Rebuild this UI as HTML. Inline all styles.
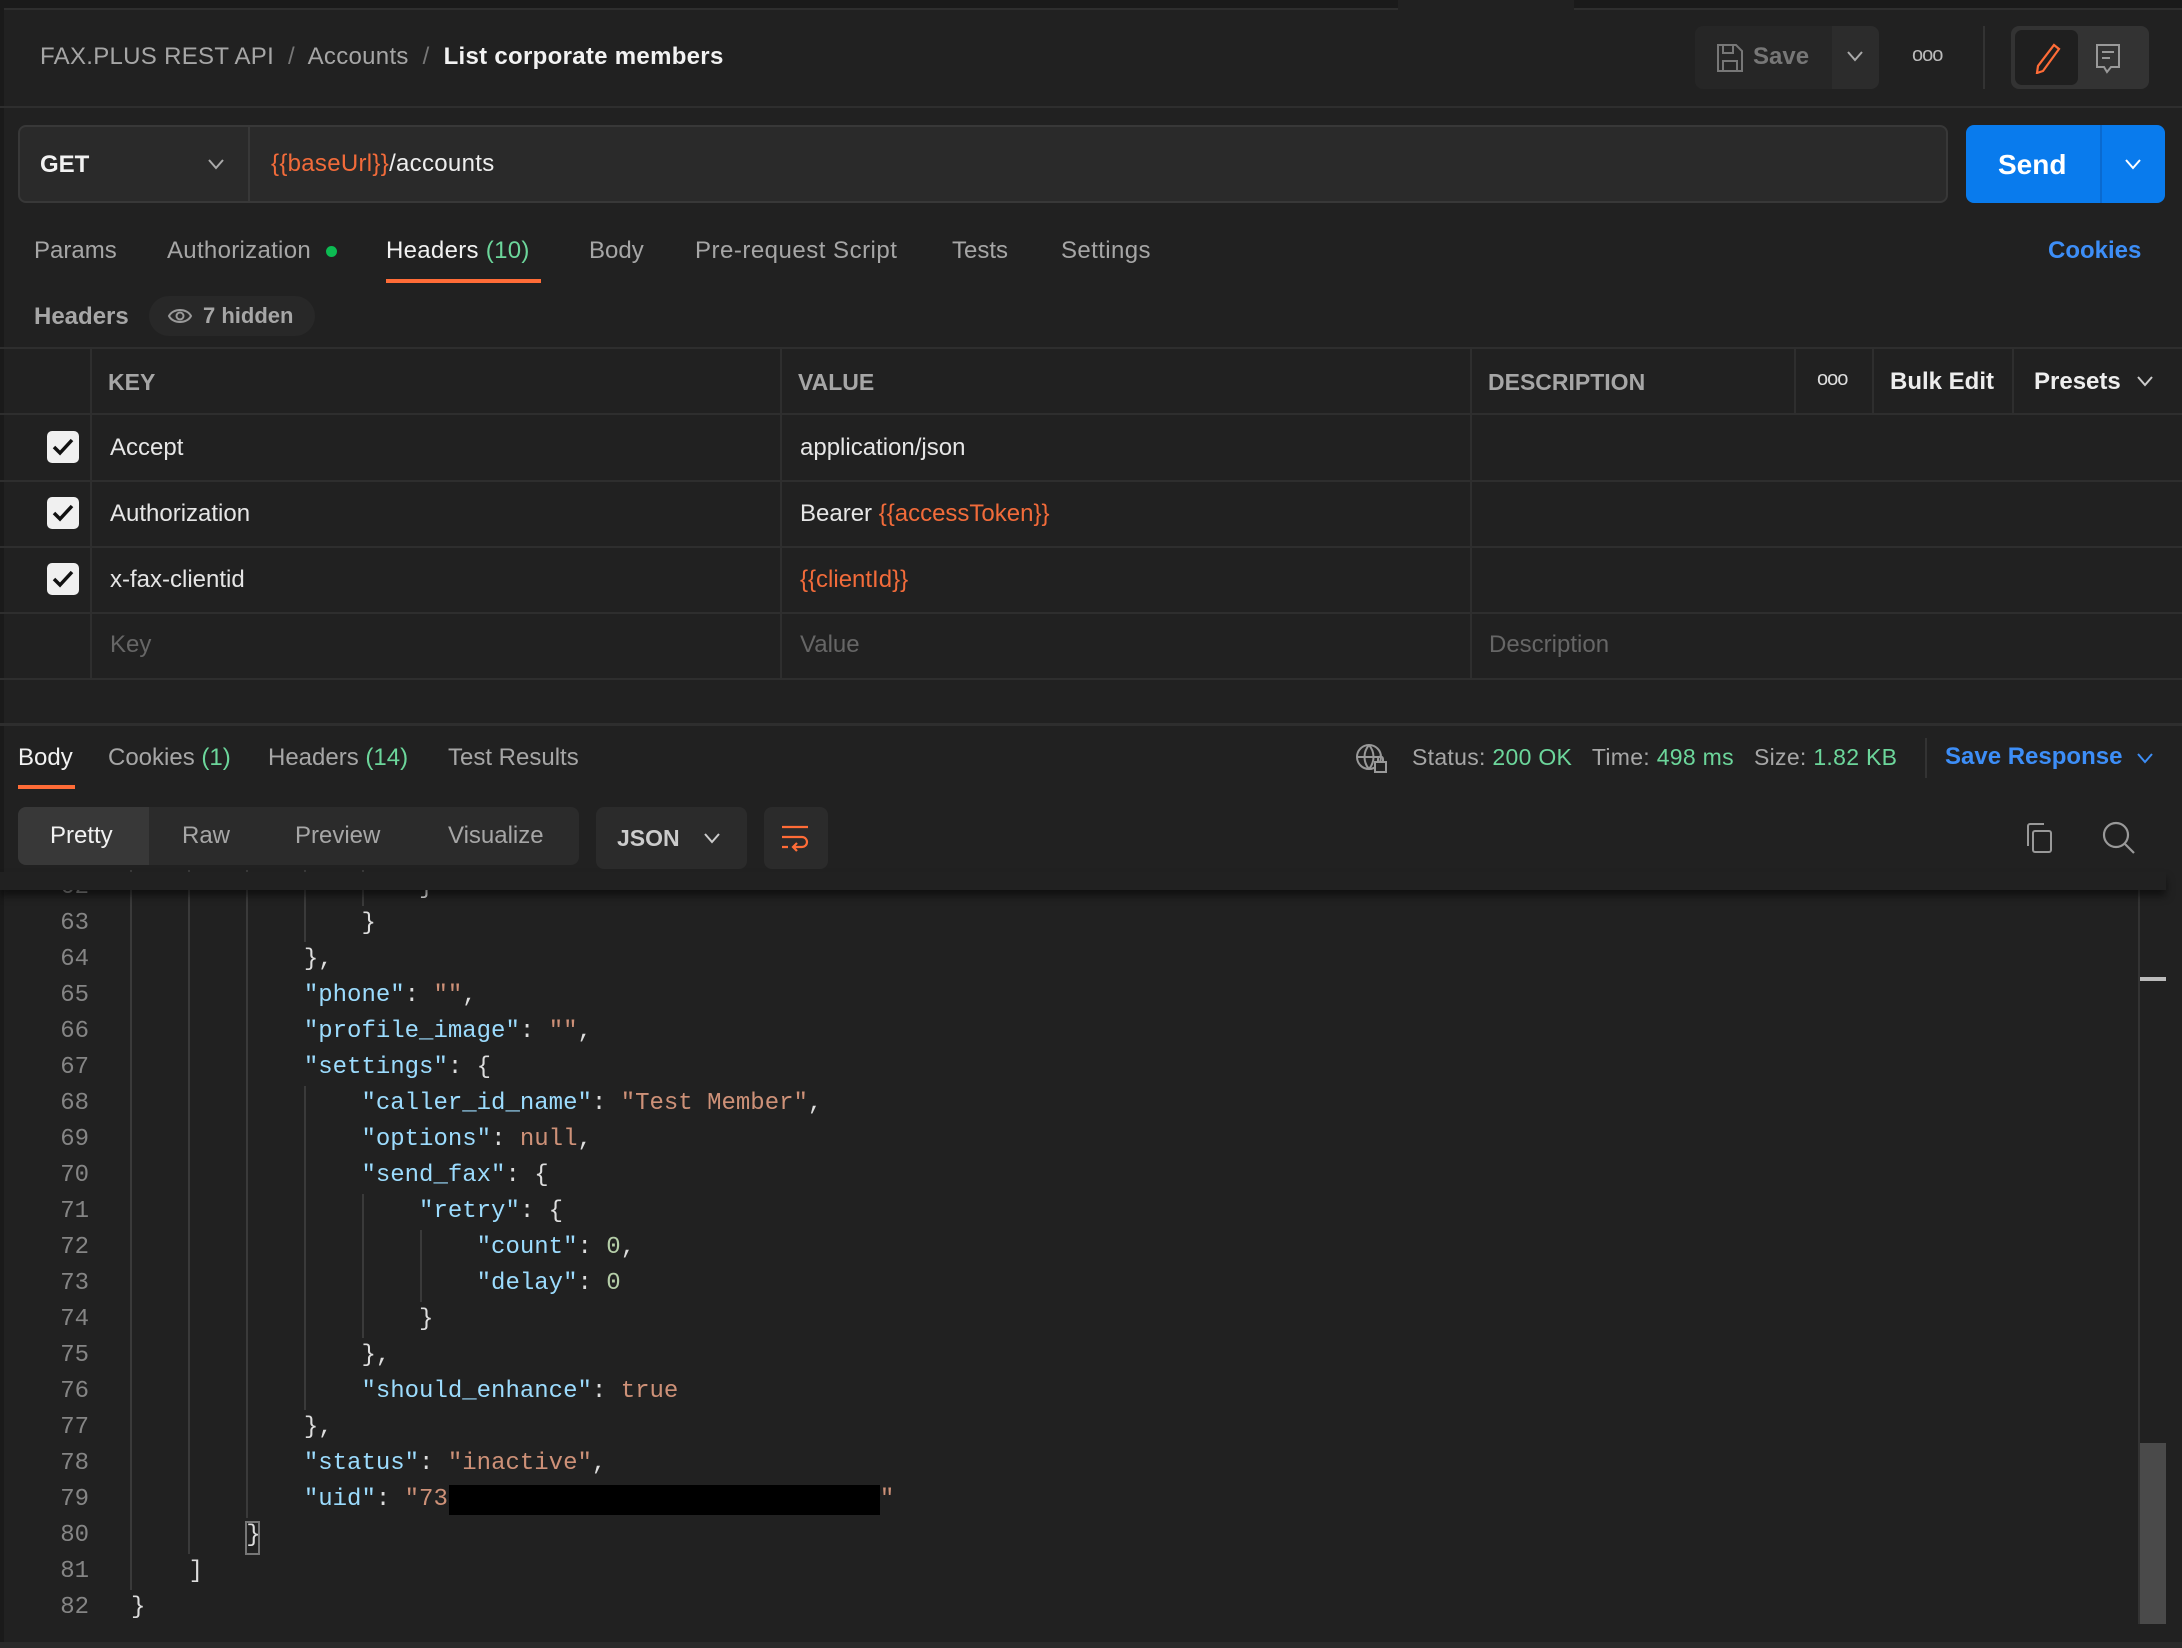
<!DOCTYPE html>
<html><head><meta charset="utf-8"><style>
*{box-sizing:border-box;margin:0;padding:0}
body{width:2182px;height:1648px;background:#212121;font-family:"Liberation Sans",sans-serif;color:#e6e6e6;position:relative;overflow:hidden}
.a{position:absolute;white-space:nowrap}
.g{color:#a6a6a6}
.gr{color:#6cd69b}
.mono{font-family:"Liberation Mono",monospace;font-size:24px}
.k{color:#9cdcfe}.s{color:#ce9178}.n{color:#b5cea8}
.vl{position:absolute;width:2px;background:#3a3a3a}
.cb{position:absolute;left:47px;width:32px;height:32px;background:#f0f0f0;border-radius:5px}
.hl{position:absolute;left:0;width:2182px;height:2px;background:#2e2e2e}
.vc{position:absolute;width:2px;background:#2e2e2e}
</style></head><body>
<div class="a" style="left:0;top:0;width:2182px;height:10px;background:#1a1a1a;border-bottom:2px solid #2e2e2e"></div>
<div class="a" style="left:1398px;top:0;width:176px;height:10px;background:#212121"></div>
<div class="a" style="left:0;top:0;width:4px;height:1648px;background:#1a1a1a"></div>
<div class="a" style="left:40px;top:43px;font-size:24px;letter-spacing:0.3px"><span class="g">FAX.PLUS REST API</span><span style="color:#777"> &nbsp;/&nbsp; </span><span class="g">Accounts</span><span style="color:#777"> &nbsp;/&nbsp; </span><span style="color:#f2f2f2;font-weight:bold">List corporate members</span></div>
<div class="a" style="left:1695px;top:26px;width:184px;height:63px;background:#262626;border-radius:8px"></div>
<div class="a" style="left:1832px;top:26px;width:47px;height:63px;background:#2c2c2c;border-radius:0 8px 8px 0"></div>
<svg class="a" style="left:1716px;top:43px" width="28" height="30" viewBox="0 0 28 30" fill="none" stroke="#777" stroke-width="2"><path d="M2 2h18l6 6v20H2z"/><path d="M7 2v8h10V2M7 28v-10h14v10"/></svg>
<div class="a" style="left:1753px;top:43px;font-size:24px;color:#777;font-weight:bold">Save</div>
<svg class="a" style="left:1846px;top:50px" width="18" height="12" viewBox="0 0 18 12" fill="none" stroke="#aaa" stroke-width="2"><path d="M2 2l7 8 7-8"/></svg>
<div class="a" style="left:1912px;top:44px;font-size:20px;color:#bbb;letter-spacing:-1px">ooo</div>
<div class="a" style="left:1983px;top:26px;width:2px;height:63px;background:#333"></div>
<div class="a" style="left:2011px;top:26px;width:138px;height:63px;background:#333;border-radius:8px"></div>
<div class="a" style="left:2015px;top:30px;width:63px;height:55px;background:#1f1f1f;border-radius:7px"></div>
<svg class="a" style="left:2032px;top:42px" width="30" height="32" viewBox="0 0 30 32" fill="none" stroke="#ff6c37" stroke-width="2.2"><path d="M22 3l5 4-16 22-6 2 1-7z"/></svg>
<svg class="a" style="left:2095px;top:43px" width="28" height="32" viewBox="0 0 28 32" fill="none" stroke="#999" stroke-width="2"><path d="M2 2h22v22h-8l-4 5-3-5H2z"/><path d="M7 9h12M7 15h8"/></svg>
<div class="hl" style="top:106px"></div>
<div class="a" style="left:18px;top:125px;width:1930px;height:78px;background:#2a2a2a;border:2px solid #383838;border-radius:8px"></div>
<div class="a" style="left:248px;top:127px;width:2px;height:74px;background:#383838"></div>
<div class="a" style="left:40px;top:151px;font-size:24px;font-weight:bold;color:#f2f2f2">GET</div>
<svg class="a" style="left:207px;top:158px" width="18" height="12" viewBox="0 0 18 12" fill="none" stroke="#aaa" stroke-width="2"><path d="M2 2l7 8 7-8"/></svg>
<div class="a" style="left:271px;top:150px;font-size:24px;letter-spacing:0.3px"><span style="color:#f26b3a">{{baseUrl}}</span><span style="color:#eee">/accounts</span></div>
<div class="a" style="left:1966px;top:125px;width:199px;height:78px;background:#097bed;border-radius:8px"></div>
<div class="a" style="left:2100px;top:125px;width:2px;height:78px;background:#0a6ad0"></div>
<div class="a" style="left:1998px;top:149px;font-size:28px;font-weight:bold;color:#fff">Send</div>
<svg class="a" style="left:2124px;top:158px" width="18" height="12" viewBox="0 0 18 12" fill="none" stroke="#fff" stroke-width="2"><path d="M2 2l7 8 7-8"/></svg>
<div class="a g" style="left:34px;top:237px;font-size:24px">Params</div>
<div class="a g" style="left:167px;top:237px;font-size:24px;letter-spacing:0.3px">Authorization</div>
<div class="a" style="left:326px;top:246px;width:11px;height:11px;border-radius:50%;background:#0cbb52"></div>
<div class="a" style="left:386px;top:237px;font-size:24px;color:#f2f2f2;letter-spacing:0.3px">Headers <span class="gr">(10)</span></div>
<div class="a" style="left:386px;top:279px;width:155px;height:4px;background:#ff6c37"></div>
<div class="a g" style="left:589px;top:237px;font-size:24px">Body</div>
<div class="a g" style="left:695px;top:237px;font-size:24px;letter-spacing:0.5px">Pre-request Script</div>
<div class="a g" style="left:952px;top:237px;font-size:24px">Tests</div>
<div class="a g" style="left:1061px;top:237px;font-size:24px;letter-spacing:0.4px">Settings</div>
<div class="a" style="left:2048px;top:237px;font-size:24px;color:#3d8ef7;font-weight:bold">Cookies</div>
<div class="a g" style="left:34px;top:303px;font-size:24px;font-weight:bold">Headers</div>
<div class="a" style="left:149px;top:296px;width:166px;height:40px;background:#282828;border-radius:20px"></div>
<svg class="a" style="left:167px;top:307px" width="26" height="18" viewBox="0 0 26 18" fill="none" stroke="#999" stroke-width="2"><path d="M2 9c4-8 18-8 22 0-4 8-18 8-22 0z"/><circle cx="13" cy="9" r="3.5"/></svg>
<div class="a g" style="left:203px;top:303px;font-size:22px;font-weight:bold">7 hidden</div>
<div class="hl" style="top:347px"></div>
<div class="hl" style="top:413px"></div>
<div class="hl" style="top:480px"></div>
<div class="hl" style="top:546px"></div>
<div class="hl" style="top:612px"></div>
<div class="hl" style="top:678px"></div>
<div class="vc" style="left:90px;top:349px;height:330px"></div>
<div class="vc" style="left:780px;top:349px;height:330px"></div>
<div class="vc" style="left:1470px;top:349px;height:330px"></div>
<div class="vc" style="left:1794px;top:349px;height:64px"></div>
<div class="vc" style="left:1872px;top:349px;height:64px"></div>
<div class="vc" style="left:2012px;top:349px;height:64px"></div>
<div class="a g" style="left:108px;top:369px;font-size:23px;font-weight:bold">KEY</div>
<div class="a g" style="left:798px;top:369px;font-size:23px;font-weight:bold">VALUE</div>
<div class="a g" style="left:1488px;top:369px;font-size:23px;font-weight:bold">DESCRIPTION</div>
<div class="a" style="left:1817px;top:368px;font-size:20px;color:#ddd;letter-spacing:-1px">ooo</div>
<div class="a" style="left:1890px;top:368px;font-size:24px;font-weight:bold;color:#eee">Bulk Edit</div>
<div class="a" style="left:2034px;top:368px;font-size:24px;font-weight:bold;color:#eee">Presets</div>
<svg class="a" style="left:2136px;top:375px" width="18" height="12" viewBox="0 0 18 12" fill="none" stroke="#ccc" stroke-width="2"><path d="M2 2l7 8 7-8"/></svg>
<div class="cb" style="top:431px"></div><div class="cb" style="top:497px"></div><div class="cb" style="top:563px"></div>
<svg class="a" style="left:47px;top:431px" width="32" height="32" viewBox="0 0 32 32" fill="none" stroke="#111" stroke-width="3.5"><path d="M7 16l6 6 12-13"/></svg>
<svg class="a" style="left:47px;top:497px" width="32" height="32" viewBox="0 0 32 32" fill="none" stroke="#111" stroke-width="3.5"><path d="M7 16l6 6 12-13"/></svg>
<svg class="a" style="left:47px;top:563px" width="32" height="32" viewBox="0 0 32 32" fill="none" stroke="#111" stroke-width="3.5"><path d="M7 16l6 6 12-13"/></svg>
<div class="a" style="left:110px;top:434px;font-size:24px">Accept</div>
<div class="a" style="left:800px;top:434px;font-size:24px">application/json</div>
<div class="a" style="left:110px;top:500px;font-size:24px">Authorization</div>
<div class="a" style="left:800px;top:500px;font-size:24px">Bearer <span style="color:#f26b3a">{{accessToken}}</span></div>
<div class="a" style="left:110px;top:566px;font-size:24px">x-fax-clientid</div>
<div class="a" style="left:800px;top:566px;font-size:24px;color:#f26b3a">{{clientId}}</div>
<div class="a" style="left:110px;top:631px;font-size:24px;color:#666">Key</div>
<div class="a" style="left:800px;top:631px;font-size:24px;color:#666">Value</div>
<div class="a" style="left:1489px;top:631px;font-size:24px;color:#666">Description</div>
<div class="a" style="left:0;top:723px;width:2182px;height:3px;background:#2e2e2e"></div>
<div class="a" style="left:18px;top:744px;font-size:24px;color:#f2f2f2">Body</div>
<div class="a" style="left:18px;top:785px;width:57px;height:4px;background:#ff6c37"></div>
<div class="a g" style="left:108px;top:744px;font-size:24px">Cookies <span class="gr">(1)</span></div>
<div class="a g" style="left:268px;top:744px;font-size:24px">Headers <span class="gr">(14)</span></div>
<div class="a g" style="left:448px;top:744px;font-size:24px">Test Results</div>
<svg class="a" style="left:1355px;top:743px" width="34" height="32" viewBox="0 0 34 32" fill="none" stroke="#999" stroke-width="2"><circle cx="14" cy="14" r="12"/><path d="M2 14h24M14 2c-6 7-6 17 0 24M14 2c6 7 6 17 0 24"/><rect x="20" y="19" width="11" height="10" fill="#212121"/><path d="M23 19v-3a2.5 2.5 0 015 0v3"/></svg>
<div class="a" style="left:1412px;top:744px;font-size:23px;letter-spacing:0.3px"><span class="g">Status: </span><span class="gr">200 OK</span><span class="g"> &nbsp; Time: </span><span class="gr">498 ms</span><span class="g"> &nbsp; Size: </span><span class="gr">1.82 KB</span></div>
<div class="a" style="left:1925px;top:738px;width:2px;height:40px;background:#333"></div>
<div class="a" style="left:1945px;top:743px;font-size:24px;font-weight:bold;color:#3d8ef7">Save Response</div>
<svg class="a" style="left:2136px;top:752px" width="18" height="12" viewBox="0 0 18 12" fill="none" stroke="#3d8ef7" stroke-width="2"><path d="M2 2l7 8 7-8"/></svg>
<div class="a" style="left:0;top:872px;width:2166px;height:18px;box-shadow:0 6px 8px rgba(0,0,0,.5);background:#212121;z-index:3"></div>
<div class="a" style="left:18px;top:807px;width:561px;height:58px;background:#2b2b2b;border-radius:8px;z-index:4"></div>
<div class="a" style="left:18px;top:807px;width:131px;height:58px;background:#383838;border-radius:8px 0 0 8px;z-index:4"></div>
<div class="a" style="left:50px;top:822px;font-size:24px;color:#f2f2f2;z-index:5">Pretty</div>
<div class="a g" style="left:182px;top:822px;font-size:24px;z-index:5">Raw</div>
<div class="a g" style="left:295px;top:822px;font-size:24px;z-index:5">Preview</div>
<div class="a g" style="left:448px;top:822px;font-size:24px;z-index:5">Visualize</div>
<div class="a" style="left:596px;top:807px;width:151px;height:62px;background:#2b2b2b;border-radius:8px;z-index:4"></div>
<div class="a" style="left:617px;top:825px;font-size:23px;font-weight:bold;color:#ccc;z-index:5">JSON</div>
<svg class="a" style="left:703px;top:832px;z-index:5" width="18" height="12" viewBox="0 0 18 12" fill="none" stroke="#ccc" stroke-width="2"><path d="M2 2l7 8 7-8"/></svg>
<div class="a" style="left:764px;top:807px;width:64px;height:62px;background:#2b2b2b;border-radius:8px;z-index:4"></div>
<svg class="a" style="left:780px;top:824px;z-index:5" width="32" height="30" viewBox="0 0 32 30" fill="none" stroke="#ff6c37" stroke-width="2.2"><path d="M2 3h26M2 13h20a5 5 0 010 10h-8M17 19l-4 4 4 4M2 23h6"/></svg>
<svg class="a" style="left:2023px;top:822px;z-index:5" width="32" height="32" viewBox="0 0 32 32" fill="none" stroke="#999" stroke-width="2"><rect x="10" y="9" width="18" height="21" rx="2"/><path d="M5 24V4a2 2 0 012-2h14"/></svg>
<svg class="a" style="left:2102px;top:821px;z-index:5" width="34" height="34" viewBox="0 0 34 34" fill="none" stroke="#999" stroke-width="2.2"><circle cx="14" cy="14" r="12"/><path d="M23 23l9 9"/></svg>
<div class="a" style="left:0;top:870px;width:2140px;height:774px;overflow:hidden">
<div class="vl" style="left:130px;top:0;height:720px"></div>
<div class="vl" style="left:188px;top:0;height:684px"></div>
<div class="vl" style="left:246px;top:0;height:648px"></div>
<div class="vl" style="left:304px;top:0;height:72px"></div>
<div class="vl" style="left:304px;top:216px;height:324px"></div>
<div class="vl" style="left:362px;top:0;height:36px"></div>
<div class="vl" style="left:362px;top:324px;height:144px"></div>
<div class="vl" style="left:420px;top:360px;height:72px"></div>
<pre class="mono" style="position:absolute;left:0;top:0;line-height:36px;color:#858585;text-align:right;width:89px;white-space:pre">62
63
64
65
66
67
68
69
70
71
72
73
74
75
76
77
78
79
80
81
82</pre>
<pre class="mono" style="position:absolute;left:131px;top:0;line-height:36px;color:#ddd;white-space:pre">                    }
                }
            },
            <span class="k">"phone"</span>: <span class="s">""</span>,
            <span class="k">"profile_image"</span>: <span class="s">""</span>,
            <span class="k">"settings"</span>: {
                <span class="k">"caller_id_name"</span>: <span class="s">"Test Member"</span>,
                <span class="k">"options"</span>: <span class="s">null</span>,
                <span class="k">"send_fax"</span>: {
                    <span class="k">"retry"</span>: {
                        <span class="k">"count"</span>: <span class="n">0</span>,
                        <span class="k">"delay"</span>: <span class="n">0</span>
                    }
                },
                <span class="k">"should_enhance"</span>: <span class="s">true</span>
            },
            <span class="k">"status"</span>: <span class="s">"inactive"</span>,
            <span class="k">"uid"</span>: <span class="s">"73                              "</span>
        }
    ]
}</pre>
<div class="a" style="left:449px;top:615px;width:431px;height:30px;background:#000"></div>
<div class="a" style="left:245px;top:651px;width:15px;height:34px;border:2px solid #777"></div>
</div>
<div class="a" style="left:2138px;top:890px;width:2px;height:734px;background:#333"></div>
<div class="a" style="left:2140px;top:977px;width:26px;height:4px;background:#bbb"></div>
<div class="a" style="left:2140px;top:1443px;width:26px;height:181px;background:#4a4a4a"></div>
<div class="a" style="left:0;top:1642px;width:2182px;height:6px;background:#2a2a2a"></div>
</body></html>
